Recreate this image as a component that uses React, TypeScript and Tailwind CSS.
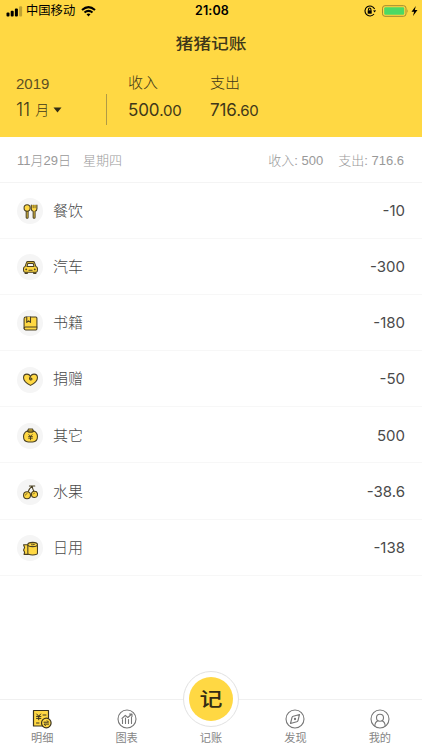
import type { ReactNode } from "react";

interface Entry {
  id: string;
  name: string;
  amount: string;
  icon: ReactNode;
}

const iconProps = {
  viewBox: "0 0 28 28",
  className: "h-[15px] w-[15px]",
  fill: "#ffd843",
  stroke: "#4a4022",
  strokeWidth: 2,
  strokeLinecap: "round" as const,
  strokeLinejoin: "round" as const,
};

const entries: Entry[] = [
  {
    id: "food",
    name: "餐饮",
    amount: "-10",
    icon: (
      <svg {...iconProps}>
        <path d="M6 13h3.500v12a1.750 1.750 0 0 1-3.500 0z" />
        <ellipse cx="7.700" cy="7.500" rx="5.700" ry="6" />
        <path d="M15.500 2v7q0 4 3.500 4.500V25a1.750 1.750 0 0 0 3.500 0V13.500q3.500-.5 3.500-4.500V2" />
        <path d="M19 2v5M22.500 2v5" fill="none" strokeWidth={1.400} />
      </svg>
    ),
  },
  {
    id: "car",
    name: "汽车",
    amount: "-300",
    icon: (
      <svg {...iconProps}>
        <path d="M4 22v3h4v-3M20 22v3h4v-3" />
        <path d="M4 12 6.500 5Q7 3 9 3h10q2 0 2.500 2L24 12q3 1 3 4v3q0 4-3 4H4q-3 0-3-4v-3q0-3 3-4z" />
        <path d="M7.500 12 9 6.500h10l1.500 5.500z" fill="#f5f5f5" />
        <path d="M11 19h6" />
        <circle cx="6" cy="17.500" r="0.800" />
        <circle cx="22" cy="17.500" r="0.800" />
      </svg>
    ),
  },
  {
    id: "book",
    name: "书籍",
    amount: "-180",
    icon: (
      <svg {...iconProps}>
        <path d="M5 2h19q2 0 2 2v20q0 2-2 2H5q-3 0-3-3V5q0-3 3-3z" />
        <path d="M26 20.500H5q-3 0-3 2.500" fill="none" />
        <path d="M7 2v10l3.500-3 3.500 3V2" />
      </svg>
    ),
  },
  {
    id: "gift",
    name: "捐赠",
    amount: "-50",
    icon: (
      <svg {...iconProps}>
        <path d="M14 25Q1 18 1 10.500 1 4 7.500 4q4 0 6.500 4 2.500-4 6.500-4Q27 4 27 10.500 27 18 14 25z" />
        <path d="M14 8q-3 4-1 6t3.500 0q1-2-2.500-3" fill="none" />
      </svg>
    ),
  },
  {
    id: "other",
    name: "其它",
    amount: "500",
    icon: (
      <svg {...iconProps}>
        <path d="M8.500 7 10 2h8l1.500 5z" />
        <path d="M8 5.500h12q7 3 7 10.500 0 10-9 10h-8Q1 26 1 16 1 8.500 8 5.500z" />
        <path d="M8 6q6 4 12 0" fill="none" />
        <path d="m11 12.500 3 3 3-3M10.500 16h7M10.500 19h7M14 16v6" fill="none" strokeWidth={1.700} />
      </svg>
    ),
  },
  {
    id: "fruit",
    name: "水果",
    amount: "-38.6",
    icon: (
      <svg {...iconProps}>
        <path d="M12 2h10M17 2Q11 7 9.500 13M17 2q1 6 3.500 10" fill="none" />
        <circle cx="7.500" cy="19" r="6.500" />
        <circle cx="21.500" cy="17.500" r="5.700" />
        <path d="M4.500 19q0-3 3-3M19 17q.5-2 2.500-2" fill="none" strokeWidth={1.200} />
      </svg>
    ),
  },
  {
    id: "daily",
    name: "日用",
    amount: "-138",
    icon: (
      <svg {...iconProps}>
        <path d="M10 7H1l2 5-2 5 2 4-1 4h9z" />
        <path d="M9 7v16q0 3 9 3t9-3V7z" />
        <ellipse cx="18" cy="6.500" rx="9" ry="4" />
        <ellipse cx="18" cy="6.500" rx="3" ry="0.800" strokeWidth={1.300} />
      </svg>
    ),
  },
];

function StatusBar() {
  return (
    <div className="grid h-[22px] grid-cols-3 items-center pl-[6px] pr-[4px] text-black">
      <div className="flex items-center">
        <svg viewBox="0 0 17 11" className="h-[11px] w-[17px]">
          <rect x="0.500" y="6.500" width="3" height="4" rx="1" />
          <rect x="4.700" y="4.700" width="3" height="5.800" rx="1" />
          <rect x="8.900" y="2.500" width="3" height="8" rx="1" />
          <rect x="13.100" y="0.300" width="3" height="10.200" rx="1" opacity="0.25" />
        </svg>
        <span className="ml-[3px] text-[12.300px] leading-[22px]">中国移动</span>
        <svg viewBox="0 0 15 11" className="ml-[6px] h-[11px] w-[15px]" fill="none" stroke="black" strokeWidth="2.100">
          <path d="M1 4Q7.500-1.600 14 4M3.500 6.500q4-3.300 8 0" />
          <path d="M5.500 8.200q2-1.500 4 0l-2 2.200z" fill="black" stroke="none" />
        </svg>
      </div>
      <div className="text-center text-[12.500px] font-semibold leading-[22px] tracking-[0.100px]">21:08</div>
      <div className="flex items-center justify-end">
        <svg viewBox="0 0 12 12" className="mr-[6px] h-3 w-3" fill="none" stroke="black" strokeWidth="1.100">
          <path d="M10.600 4A5 5 0 1 0 10 9" />
          <path d="m9 5.500 1.700 2L12 5.200z" fill="black" stroke="none" />
          <rect x="3.700" y="5.300" width="4" height="3.400" fill="black" stroke="none" />
          <path d="M4.500 5.500V4.200q0-1.200 1.200-1.200t1.200 1.200v1.300" />
        </svg>
        <svg viewBox="0 0 27 12" className="h-3 w-[27px]">
          <rect x="0.500" y="0.700" width="23.500" height="10.600" rx="2.500" fill="none" stroke="#a08a31" />
          <rect x="2.200" y="2.300" width="20" height="7.400" rx="1.200" fill="#4cd964" />
          <path d="M25.200 4q1.300 2 0 4z" fill="#a08a31" />
        </svg>
        <svg viewBox="0 0 7 10" className="ml-[2px] h-[10px] w-[7px]">
          <path d="M4.800 0 .5 5.700h2.600L2 10l4.500-5.900H3.800z" />
        </svg>
      </div>
    </div>
  );
}

function Total({ label, whole, cents }: { label: string; whole: string; cents: string }) {
  return (
    <div className="w-[82px]">
      <p className="text-[15px] font-light leading-[22px]">{label}</p>
      <p className="mt-[4px] whitespace-nowrap text-[17px] leading-[24px] tracking-[-0.200px]">
        {whole}
        <span className="text-[15px]">.{cents}</span>
      </p>
    </div>
  );
}

function Header() {
  return (
    <header className="h-[137px] bg-[#ffd843] text-[#403719]">
      <StatusBar />
      <h1 className="h-[50px] text-center text-[17.800px] font-medium leading-[43px]">
        <span className="inline-block scale-y-[0.850]">猪猪记账</span>
      </h1>
      <div className="flex pl-4">
        <div className="w-[90px]">
          <p className="pt-px font-['Liberation_Sans'] text-[15px] leading-[21px] text-[#5c4f24]">2019</p>
          <button className="mt-[4px] flex items-center leading-[24px]">
            <span className="text-[18px] font-light">11</span>
            <span className="ml-[5px] text-[14px] font-light">月</span>
            <svg viewBox="0 0 9 6" className="ml-[4px] h-[6px] w-[9px]" fill="#332c14">
              <path d="M.5.500h8l-4 5z" />
            </svg>
          </button>
        </div>
        <div className="mr-[21px] mt-[22px] h-[31px] w-px bg-[#b19a45]" />
        <Total label="收入" whole="500" cents="00" />
        <Total label="支出" whole="716" cents="60" />
      </div>
    </header>
  );
}

function EntryRow({ entry }: { entry: Entry }) {
  return (
    <li className="flex h-[56.200px] items-center border-b border-[#f7f7f7] pl-[17px] pr-[17px] pt-[2px] text-[15px] text-[#4a4a4a]">
      <span className="flex h-[26px] w-[26px] items-center justify-center rounded-full bg-[#f5f5f5]">
        {entry.icon}
      </span>
      <span className="ml-[10px] font-light">{entry.name}</span>
      <span className="ml-auto">{entry.amount}</span>
    </li>
  );
}

function Tab({ label, children }: { label: string; children?: ReactNode }) {
  return (
    <button className="flex flex-1 flex-col items-center pt-[8px] text-[11.200px] leading-[17px] text-[#858585]">
      <span className="flex h-[22px] items-center justify-center">{children}</span>
      <span>{label}</span>
    </button>
  );
}

function TabBar() {
  const outline = {
    viewBox: "0 0 20 20",
    className: "h-5 w-5",
    fill: "none",
    stroke: "#777777",
    strokeWidth: 1.1,
    strokeLinecap: "round" as const,
    strokeLinejoin: "round" as const,
  };
  return (
    <nav className="flex h-[51px] border-t border-[#f0f0f0] bg-white">
      <Tab label="明细">
        <svg viewBox="0 0 20 20" className="h-5 w-5" fill="#ffd843" stroke="#3b3420" strokeWidth="1.200" strokeLinecap="round" strokeLinejoin="round">
          <path d="M1.500 1.500h15V17h-15z" />
          <path d="m4.700 5 2 2.200L8.700 5M4.500 7.400h4.400M4.500 9.400h4.400M6.700 7.400v3.400M11 6h3M4.500 14h2.500" fill="none" strokeWidth="1" />
          <circle cx="14.300" cy="14" r="4.800" />
          <path d="M12 13.200h4.600l-1.400-1.500M16.600 15.100H12l1.400 1.500" fill="none" strokeWidth="1" />
        </svg>
      </Tab>
      <Tab label="图表">
        <svg {...outline}>
          <circle cx="10" cy="10" r="9" />
          <path d="M5.500 14.500v-4M8.500 14.500V9M11.500 14.500v-4M14.500 14.500V8M5 9.500 8.300 6.300l2.500 2.200 4-3.500M12.500 5h2.500v2.500" />
        </svg>
      </Tab>
      <div className="relative flex flex-1">
        <span className="absolute left-1/2 top-[-29px] flex h-14 w-14 -translate-x-1/2 items-center justify-center rounded-full border border-[#e2e2e2] bg-white">
          <span className="flex h-11 w-11 items-center justify-center rounded-full bg-[#ffd843] text-[23px] font-medium leading-none text-[#332c14]">
            <span className="inline-block scale-y-[0.850]">记</span>
          </span>
        </span>
        <Tab label="记账" />
      </div>
      <Tab label="发现">
        <svg {...outline}>
          <circle cx="10" cy="10" r="9" />
          <path d="m14.500 5.500-1.500 6q-.3 1-1.300 1.300l-6.200 1.700 1.500-6q.3-1 1.300-1.300z" />
          <circle cx="10" cy="10" r="0.600" fill="#777777" />
        </svg>
      </Tab>
      <Tab label="我的">
        <svg {...outline}>
          <circle cx="10" cy="10" r="9" />
          <circle cx="10" cy="8.800" r="3.500" />
          <path d="M4.800 17q.2-4 3.200-5.200M15.200 17q-.2-4-3.200-5.200" />
        </svg>
      </Tab>
    </nav>
  );
}

export default function App() {
  return (
    <div className="flex h-[750px] w-[422px] flex-col overflow-hidden bg-white font-[Inter,'Noto_Sans_CJK_SC',sans-serif]">
      <Header />
      <main className="flex-1">
        <div className="flex h-[45.500px] items-center border-b border-[#f4f4f4] pl-[17px] pr-[18px] pt-[2px] font-['Liberation_Sans','Noto_Sans_CJK_SC',sans-serif] text-[13px] font-light text-[#999999]">
          <span>11月29日</span>
          <span className="ml-[12px]">星期四</span>
          <span className="ml-auto">收入: 500</span>
          <span className="ml-[15px]">支出: 716.6</span>
        </div>
        <ul>
          {entries.map((entry) => (
            <EntryRow key={entry.id} entry={entry} />
          ))}
        </ul>
      </main>
      <TabBar />
    </div>
  );
}
